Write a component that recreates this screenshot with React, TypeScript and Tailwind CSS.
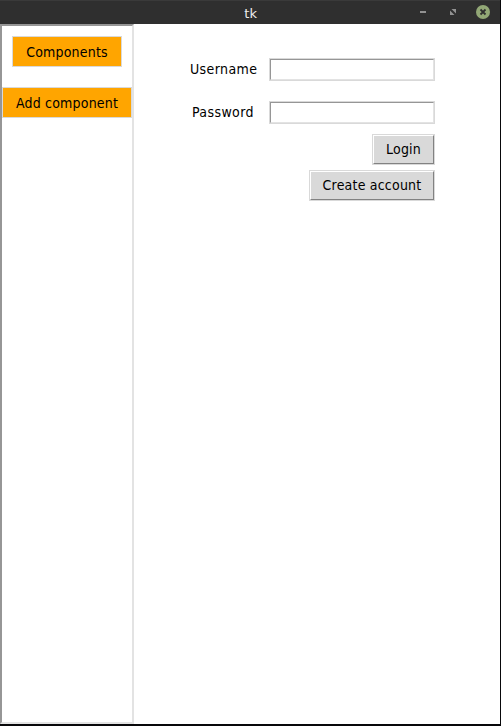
import type { ReactNode } from "react";

function NavButton({ className, children }: { className: string; children: ReactNode }) {
  return (
    <button className={`flex h-[31px] shrink-0 items-center justify-center whitespace-nowrap border border-[#d9d9d9] bg-[#ffa500] ${className}`}>
      {children}
    </button>
  );
}

function Field({ label, labelClass, type }: { label: string; labelClass: string; type: string }) {
  return (
    <label className="flex h-[23px] items-center justify-end">
      <span className={`pb-px text-left tracking-[0.4px] ${labelClass}`}>{label}</span>
      <span className="h-[23px] w-[166px] border border-[#d9d9d9]">
        <input type={type} className="block h-[21px] w-full border border-t-[#969696] border-r-[#e3e3e3] border-b-[#e3e3e3] border-l-[#969696] bg-white px-1 outline-none" />
      </span>
    </label>
  );
}

function FormButton({ className, children }: { className: string; children: ReactNode }) {
  return (
    <button className={`h-[31px] border border-[#d9d9d9] ${className}`}>
      <span className="flex h-[29px] items-center justify-center whitespace-nowrap border border-t-white border-r-[#828282] border-b-[#828282] border-l-white bg-[#d9d9d9] pb-0.5">
        {children}
      </span>
    </button>
  );
}

export default function App() {
  return (
    <div className="flex h-[726px] w-[501px] flex-col overflow-hidden border-r border-b-2 border-[#08080a] bg-white font-['DejaVu_Sans_Condensed','DejaVu_Sans',sans-serif] text-[14px] leading-4 tracking-[0.2px] text-black [font-stretch:90%]">
      <header className="flex h-6 shrink-0 items-center border-t border-[#3a3a3a] bg-[#2f2f2f] text-[#eeeeee]">
        <span className="w-[258px] pt-[3px] pr-px text-right font-['DejaVu_Sans',sans-serif] text-[13px] tracking-normal [font-stretch:100%]">tk</span>
        <svg className="ml-auto h-[23px] w-[90px]" viewBox="0 0 90 23" fill="none">
          <path d="M10 10h6v2h-6z" fill="#929292" />
          <path d="M41.500 8H46v4.500zM40 9.500v4.500h4.500z" fill="#929292" />
          <circle cx="73" cy="11" r="7" fill="#92a776" />
          <path d="M70.500 8.500l5 5M75.500 8.500l-5 5" stroke="#2f2f2f" strokeWidth="1.800" />
        </svg>
      </header>
      <div className="flex min-h-0 flex-1">
        <aside className="flex w-[134px] shrink-0 flex-col items-center border-2 border-t-[#969696] border-r-[#e3e3e3] border-b-[#e3e3e3] border-l-[#969696] pt-[10px]">
          <NavButton className="w-[110px]">Components</NavButton>
          <NavButton className="mt-5 w-[130px]">Add component</NavButton>
        </aside>
        <main className="flex w-[301px] flex-col items-end pt-[34px]">
          <Field label="Username" labelClass="w-[79px]" type="text" />
          <div className="mt-5">
            <Field label="Password" labelClass="w-[77px]" type="password" />
          </div>
          <FormButton className="mt-[10px] w-[63px]">Login</FormButton>
          <FormButton className="mt-[5px] w-[126px]">Create account</FormButton>
        </main>
      </div>
    </div>
  );
}
